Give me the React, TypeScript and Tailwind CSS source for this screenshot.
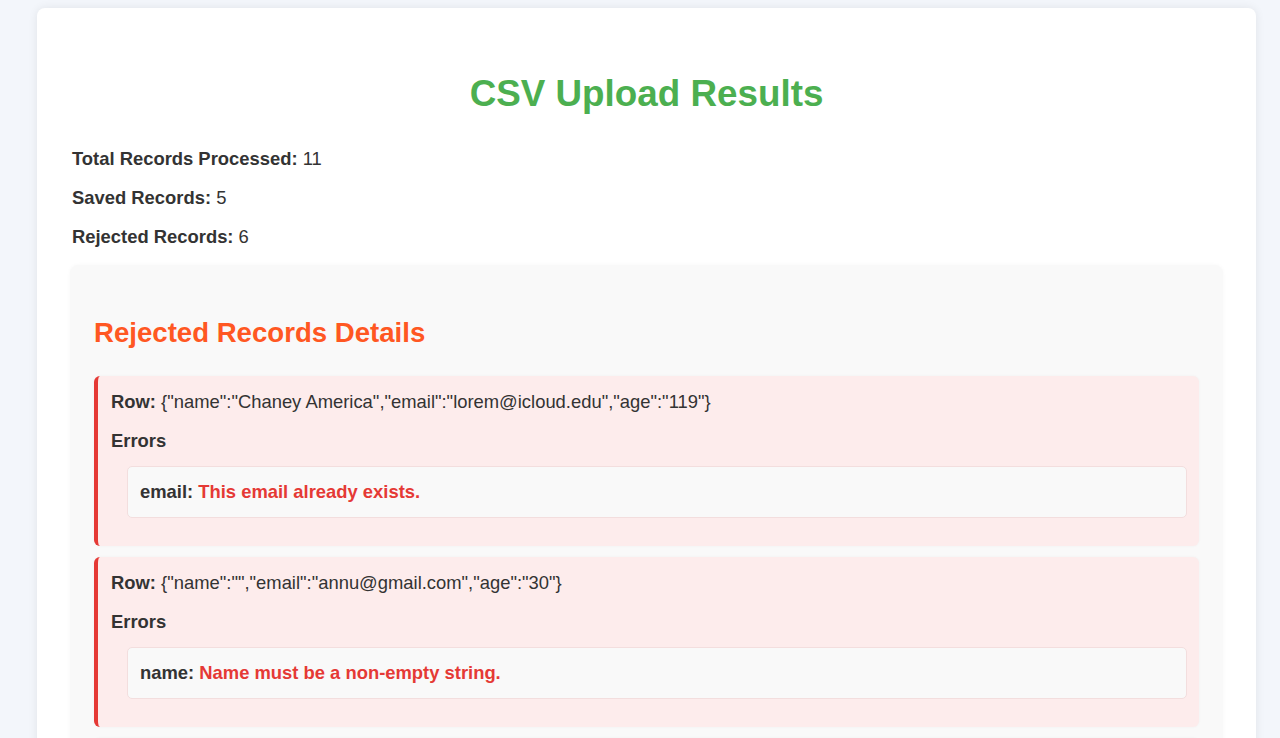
const rejected = [
  {
    row: '{"name":"Chaney America","email":"lorem@icloud.edu","age":"119"}',
    errors: [{ field: "email", message: "This email already exists." }],
  },
  {
    row: '{"name":"","email":"annu@gmail.com","age":"30"}',
    errors: [{ field: "name", message: "Name must be a non-empty string." }],
  },
  {
    row: '{"name":"Rahul","email":"rahul@","age":"25"}',
    errors: [{ field: "email", message: "Email must be a valid email address." }],
  },
]

export default function App() {
  return (
    <div className="min-h-screen bg-[#f3f6fb] pt-2 pb-6 pl-[37px] pr-[24px] text-[#333] font-['Liberation_Sans',Arial,sans-serif]">
      <div className="bg-white rounded-lg shadow-[0_0_10px_rgba(0,0,0,0.08)] px-[33px] pt-[62px] pb-8">
        <h1 className="text-center text-[36.8px] leading-[48px] font-bold text-[#4caf50]">CSV Upload Results</h1>

        <div className="mt-[21px] pl-[2px] text-[18.4px]">
          <p className="leading-[39px]"><strong>Total Records Processed:</strong> 11</p>
          <p className="leading-[39px]"><strong>Saved Records:</strong> 5</p>
          <p className="leading-[39px]"><strong>Rejected Records:</strong> 6</p>
        </div>

        <div className="mt-[9px] bg-[#f9f9f9] rounded-lg px-6 pt-[50px] pb-6 shadow-[0_0_4px_rgba(0,0,0,0.03)]">
          <h2 className="text-[27.6px] leading-[36px] font-bold text-[#ff5722]">Rejected Records Details</h2>

          <div className="mt-[25px] flex flex-col gap-[11px]">
            {rejected.map((r, i) => (
              <div
                key={i}
                className="bg-[#fdecec] border-l-4 border-[#e53935] rounded-md pl-[13px] pr-[12px] pt-[14px] pb-[28px] shadow-[0_0_3px_rgba(0,0,0,0.04)]"
              >
                <p className="text-[18.4px] leading-6"><strong>Row:</strong> {r.row}</p>
                <p className="mt-[15px] text-[18.4px] leading-6 font-bold">Errors</p>
                <ul className="mt-[13px] pl-4 flex flex-col gap-2">
                  {r.errors.map((e, j) => (
                    <li
                      key={j}
                      className="bg-[#f9f9f9] border border-[#f3dede] rounded-[5px] px-3 py-[13px] text-[18.4px] leading-6 font-bold"
                    >
                      {e.field}: <span className="text-[#e53935]">{e.message}</span>
                    </li>
                  ))}
                </ul>
              </div>
            ))}
          </div>
        </div>
      </div>
    </div>
  )
}
